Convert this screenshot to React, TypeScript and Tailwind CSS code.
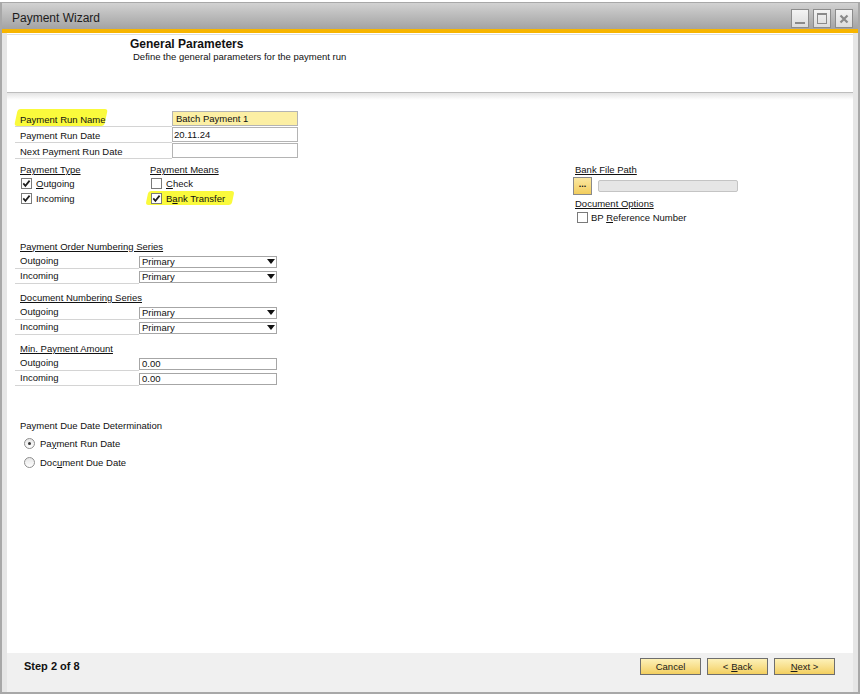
import React from "react";

const FONT = "font-['Liberation_Sans',Arial,sans-serif]";

function Check({ checked }: { checked?: boolean }) {
  return (
    <span className="w-[11px] h-[11px] border border-[#7a7a7a] bg-white flex items-center justify-center shrink-0">
      {checked && (
        <svg width="9" height="9" viewBox="0 0 9 9">
          <path d="M1.3 4.4 L3.4 6.9 L7.6 1.6" stroke="#1e1e1e" strokeWidth="1.7" fill="none" />
        </svg>
      )}
    </span>
  );
}

function Radio({ checked }: { checked?: boolean }) {
  return (
    <span className="w-[11px] h-[11px] rounded-full border border-[#8e8e8e] bg-gradient-to-b from-[#e6e6e6] to-white flex items-center justify-center shrink-0">
      {checked && <span className="w-[3px] h-[3px] rounded-full bg-[#333]" />}
    </span>
  );
}

function Arrow() {
  return (
    <svg width="8" height="5" viewBox="0 0 8 5">
      <path d="M0 0 L8 0 L4 5 Z" fill="#111" />
    </svg>
  );
}

type Row = { label: string; value: string; drop?: boolean };

function Section({ title, rows, mt }: { title: string; rows: Row[]; mt: string }) {
  return (
    <div className={`w-[262px] ${mt}`}>
      <div className="h-[15px] pl-[5px] flex items-center">
        <span className="underline">{title}</span>
      </div>
      {rows.map((r, i) => (
        <div key={i} className="flex h-[15px] items-center">
          <div className="w-[124px] h-full border-b border-[#d4d4d4] pl-[5px] flex items-center">{r.label}</div>
          <div className="w-[138px] h-[12px] border border-[#a6a6a6] bg-white pl-[2px] pr-[1px] flex items-center justify-between">
            <span>{r.value}</span>
            {r.drop && <Arrow />}
          </div>
        </div>
      ))}
    </div>
  );
}

function WinBtn({ children, align }: { children: React.ReactNode; align: string }) {
  return (
    <div className={`w-[18px] h-[19px] border border-[#8c8c8c] bg-gradient-to-b from-[#f4f4f4] to-[#dcdcdc] flex justify-center ${align}`}>
      {children}
    </div>
  );
}

function FootBtn({ children }: { children: React.ReactNode }) {
  return (
    <div className="w-[61px] h-[17px] border border-[#6e6e6e] bg-gradient-to-b from-[#fdf1b8] to-[#f3cf5e] flex items-center justify-center text-[9.5px] text-[#1a1a1a]">
      {children}
    </div>
  );
}

export default function App() {
  return (
    <div className={`w-[863px] h-[696px] bg-white ${FONT} text-[9.5px] text-[#111] leading-none`}>
      <div className="mt-[2px] w-[860px] h-[692px] border-x-2 border-t border-b-2 border-[#a8a8a8] flex flex-col bg-[#e6e6e6]">
        {/* title bar */}
        <div className="h-[26px] shrink-0 bg-gradient-to-b from-[#d2d2d2] to-[#a3a3a3] flex items-end justify-between pl-[10px] pr-[5px] pb-[1px]">
          <div className="text-[12px] text-[#1c1c1c] self-center pt-[4px]">Payment Wizard</div>
          <div className="flex gap-[4px]">
            <WinBtn align="items-end pb-[3px]">
              <div className="w-[10px] h-[2px] bg-[#8a8a8a]" />
            </WinBtn>
            <WinBtn align="items-center">
              <div className="w-[10px] h-[11px] border border-t-2 border-[#8a8a8a]" />
            </WinBtn>
            <WinBtn align="items-center">
              <svg width="10" height="10" viewBox="0 0 10 10">
                <path d="M1.5 1.5 L8.5 8.5 M8.5 1.5 L1.5 8.5" stroke="#8a8a8a" strokeWidth="2.2" />
              </svg>
            </WinBtn>
          </div>
        </div>
        <div className="h-[4px] shrink-0 bg-[#f7b500]" />
        {/* body */}
        <div className="flex-1 flex flex-col pl-[5px] pr-[5px] min-h-0">
          <div className="flex-1 bg-white flex flex-col">
            {/* header */}
            <div className="h-[58px] shrink-0 mt-[1px] border-t border-[#dedede] pl-[123px] pt-[3px]">
              <div className="text-[12px] font-bold leading-[13px] text-[#111]">General Parameters</div>
              <div className="pl-[3px] leading-[11px] text-[9.5px]">Define the general parameters for the payment run</div>
            </div>
            <div className="h-[1px] bg-[#bdbdbd] shrink-0" />
            <div className="h-[7px] bg-gradient-to-b from-[#e4e4e4] to-white shrink-0" />

            {/* form */}
            <div className="pl-[8px] pt-[11px]">
              <div className="flex h-[16px]">
                <div className="w-[157px] border-b border-[#d4d4d4] pl-[5px] pt-[2px] flex items-center relative">
                  <span className="absolute left-[1px] top-[-2px] w-[90px] h-[17px] bg-[#fafa3c] -skew-x-12 rounded-[3px]" />
                  <span className="relative">Payment Run Name</span>
                </div>
                <div className="w-[126px] h-[15px] border border-[#b4b4b4] bg-[#fcefa4] pl-[3px] pt-[1px] flex items-center">Batch Payment 1</div>
              </div>
              <div className="flex h-[16px]">
                <div className="w-[157px] border-b border-[#d4d4d4] pl-[5px] pt-[2px] flex items-center">Payment Run Date</div>
                <div className="w-[126px] h-[15px] border border-[#b4b4b4] bg-white pl-[1px] pt-[1px] flex items-center">20.11.24</div>
              </div>
              <div className="flex h-[16px]">
                <div className="w-[157px] border-b border-[#d4d4d4] pl-[5px] pt-[2px] flex items-center">Next Payment Run Date</div>
                <div className="w-[126px] h-[15px] border border-[#b4b4b4] bg-white" />
              </div>

              {/* checkbox block */}
              <div className="flex h-[47px] mt-[3px]">
                <div className="w-[130px] shrink-0">
                  <div className="h-[14px] pl-[5px] pt-[2px] flex items-center">
                    <span className="underline">Payment Type</span>
                  </div>
                  <div className="h-[15px] pl-[6px] flex items-center gap-[4px]">
                    <Check checked />
                    <span>
                      <span className="underline">O</span>utgoing
                    </span>
                  </div>
                  <div className="h-[15px] pl-[6px] flex items-center gap-[4px]">
                    <Check checked />
                    <span>Incoming</span>
                  </div>
                </div>
                <div className="w-[425px] shrink-0">
                  <div className="h-[14px] pl-[5px] pt-[2px] flex items-center">
                    <span className="underline">Payment Means</span>
                  </div>
                  <div className="h-[15px] pl-[6px] flex items-center gap-[4px]">
                    <Check />
                    <span>
                      <span className="underline">C</span>heck
                    </span>
                  </div>
                  <div className="h-[15px] pl-[6px] flex items-center gap-[4px] relative">
                    <span className="absolute left-[2px] top-[0px] w-[86px] h-[14px] bg-[#fafa3c] -skew-x-12 rounded-[3px]" />
                    <span className="relative">
                      <Check checked />
                    </span>
                    <span className="relative">
                      B<span className="underline">a</span>nk Transfer
                    </span>
                  </div>
                </div>
                <div className="shrink-0">
                  <div className="h-[14px] pl-[5px] pt-[2px] flex items-center">
                    <span className="underline">Bank File Path</span>
                  </div>
                  <div className="mt-[1px] h-[18px] pl-[3px] flex items-center gap-[6px]">
                    <div className="w-[19px] h-[18px] border border-[#8a8a8a] bg-gradient-to-b from-[#fbe8a0] to-[#f2cd5c] flex items-center justify-center text-[9px] font-bold pb-[3px]">
                      ...
                    </div>
                    <div className="w-[140px] h-[12px] border border-[#c4c4c4] rounded-[2px] bg-[#e6e6e6]" />
                  </div>
                  <div className="mt-[2px] h-[14px] pl-[5px] flex items-center">
                    <span className="underline">Document Options</span>
                  </div>
                  <div className="h-[13px] pl-[7px] flex items-center gap-[3px]">
                    <Check />
                    <span>
                      BP <span className="underline">R</span>eference Number
                    </span>
                  </div>
                </div>
              </div>

              <Section
                title="Payment Order Numbering Series"
                mt="mt-[30px]"
                rows={[
                  { label: "Outgoing", value: "Primary", drop: true },
                  { label: "Incoming", value: "Primary", drop: true },
                ]}
              />
              <Section
                title="Document Numbering Series"
                mt="mt-[6px]"
                rows={[
                  { label: "Outgoing", value: "Primary", drop: true },
                  { label: "Incoming", value: "Primary", drop: true },
                ]}
              />
              <Section
                title="Min. Payment Amount"
                mt="mt-[6px]"
                rows={[
                  { label: "Outgoing", value: "0.00" },
                  { label: "Incoming", value: "0.00" },
                ]}
              />

              <div className="mt-[33px] h-[14px] pl-[5px] flex items-center">Payment Due Date Determination</div>
              <div className="mt-[1px] h-[19px] pl-[9px] flex items-center gap-[5px]">
                <Radio checked />
                <span>
                  Pa<span className="underline">y</span>ment Run Date
                </span>
              </div>
              <div className="h-[19px] pl-[9px] flex items-center gap-[5px]">
                <Radio />
                <span>
                  Doc<span className="underline">u</span>ment Due Date
                </span>
              </div>
            </div>
          </div>
          {/* footer */}
          <div className="h-[39px] shrink-0 bg-[#f0f0f0] flex items-start justify-between pl-[17px] pr-[18px] pt-[5px]">
            <div className="text-[11px] font-bold h-[17px] flex items-center text-[#111]">Step 2 of 8</div>
            <div className="flex gap-[6px]">
              <FootBtn>Cancel</FootBtn>
              <FootBtn>
                &lt; <span className="underline ml-[3px]">B</span>ack
              </FootBtn>
              <FootBtn>
                <span className="underline">N</span>ext &gt;
              </FootBtn>
            </div>
          </div>
        </div>
      </div>
    </div>
  );
}
